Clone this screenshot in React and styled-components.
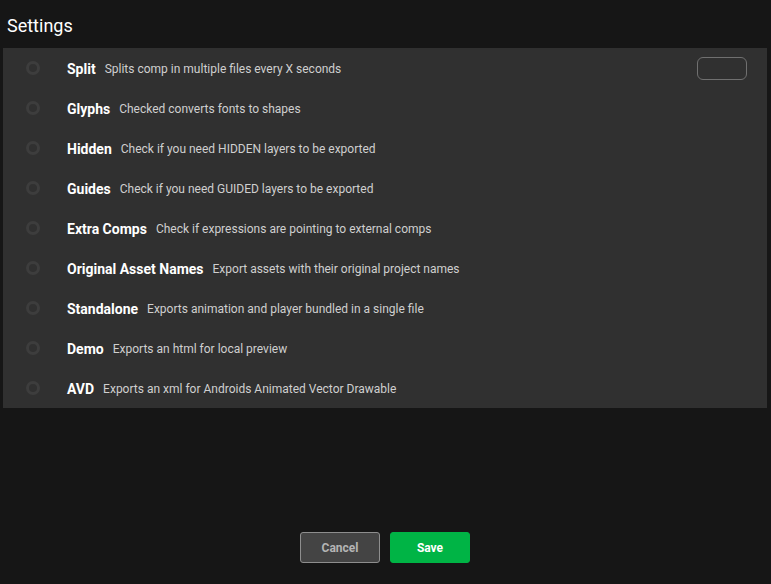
import React from "react";
import styled, { createGlobalStyle } from "styled-components";

const Global = createGlobalStyle`
  html, body {
    margin: 0;
    padding: 0;
    background: #161616;
    font-family: Roboto, "Liberation Sans", sans-serif;
  }
`;

const Page = styled.div`
  width: 771px;
  height: 584px;
  display: flex;
  flex-direction: column;
  background: #161616;
`;

const Title = styled.h1`
  margin: 0;
  padding: 15px 0 0 7px;
  height: 48px;
  box-sizing: border-box;
  font-size: 18px;
  font-weight: 400;
  color: #ffffff;
  line-height: 21px;
`;

const Panel = styled.div`
  margin: 0 4px 0 3px;
  background: #303030;
  display: flex;
  flex-direction: column;
`;

const Row = styled.div`
  height: 40px;
  box-sizing: border-box;
  display: flex;
  align-items: center;
  padding: 1px 20px 0 23px;
`;

const Radio = styled.span`
  width: 14px;
  height: 14px;
  border-radius: 50%;
  box-sizing: border-box;
  border: 3px solid #3d3d3d;
  flex-shrink: 0;
  margin: -1px 27px 0 0;
`;

const Label = styled.span`
  font-size: 14px;
  font-weight: 700;
  color: #ffffff;
  margin-right: 9px;
`;

const Desc = styled.span`
  font-size: 12px;
  color: #cfcfcf;
`;

const SecondsInput = styled.input`
  margin: -1px 0 0 auto;
  width: 50px;
  height: 23px;
  box-sizing: border-box;
  border: 1px solid #707070;
  border-radius: 6px;
  background: transparent;
  color: #fff;
  outline: none;
`;

const Footer = styled.div`
  margin-top: auto;
  display: flex;
  justify-content: center;
  gap: 10px;
  padding: 0 1px 21px 0;
`;

const Button = styled.button`
  width: 80px;
  height: 31px;
  border-radius: 3px;
  font-family: Roboto, "Liberation Sans", sans-serif;
  font-size: 12px;
  font-weight: 700;
  cursor: pointer;
  border: 1px solid ${p => (p.$primary ? "#00b445" : "#8e8e8e")};
  background: ${p => (p.$primary ? "#00b445" : "#444444")};
  color: ${p => (p.$primary ? "#ffffff" : "#b4b4b4")};
`;

const settings = [
  ["Split", "Splits comp in multiple files every X seconds"],
  ["Glyphs", "Checked converts fonts to shapes"],
  ["Hidden", "Check if you need HIDDEN layers to be exported"],
  ["Guides", "Check if you need GUIDED layers to be exported"],
  ["Extra Comps", "Check if expressions are pointing to external comps"],
  ["Original Asset Names", "Export assets with their original project names"],
  ["Standalone", "Exports animation and player bundled in a single file"],
  ["Demo", "Exports an html for local preview"],
  ["AVD", "Exports an xml for Androids Animated Vector Drawable"],
];

export default function App() {
  return (
    <Page>
      <Global />
      <Title>Settings</Title>
      <Panel>
        {settings.map(([name, desc], i) => (
          <Row key={name}>
            <Radio />
            <Label>{name}</Label>
            <Desc>{desc}</Desc>
            {i === 0 && <SecondsInput />}
          </Row>
        ))}
      </Panel>
      <Footer>
        <Button>Cancel</Button>
        <Button $primary>Save</Button>
      </Footer>
    </Page>
  );
}
